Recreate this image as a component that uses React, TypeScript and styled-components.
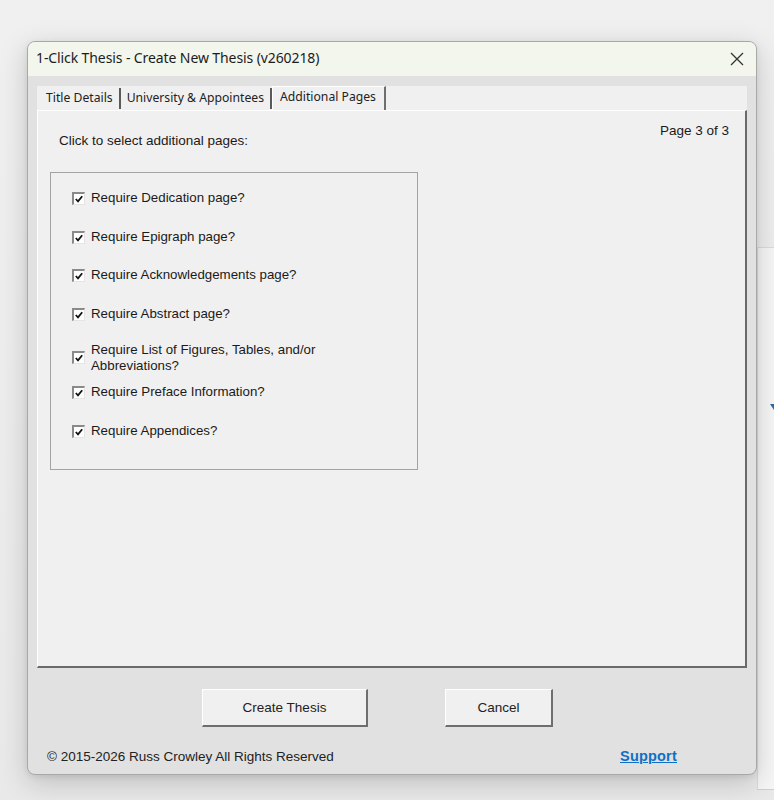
import React from "react";
import styled, { createGlobalStyle } from "styled-components";

const Global = createGlobalStyle`
  html, body { margin: 0; padding: 0; }
  body {
    background: #ececec;
    width: 774px;
    height: 800px;
    overflow: hidden;
    font-family: "Liberation Sans", Arial, sans-serif;
  }
`;

const Desktop = styled.div`
  position: relative;
  width: 774px;
  height: 800px;
  background: linear-gradient(#f0f0f0, #e9e9e9);
`;

const BackWindow = styled.div`
  position: absolute;
  left: 757px;
  top: 247px;
  width: 40px;
  height: 541px;
  background: #f6f6f6;
  border-top: 1px solid #dcdcdc;
  border-left: 1px solid #dcdcdc;
  border-bottom: 1px solid #d0d0d0;
`;

const BlueMark = styled.div`
  position: absolute;
  left: 770px;
  top: 404px;
  width: 4px;
  height: 6px;
  background: #2b6ca8;
  clip-path: polygon(0 0, 100% 0, 100% 100%);
`;

const Dialog = styled.div`
  position: absolute;
  left: 27px;
  top: 41px;
  width: 730px;
  height: 734px;
  box-sizing: border-box;
  border: 1px solid #a8a8a8;
  border-radius: 8px;
  overflow: hidden;
  background: #e1e1e1;
  box-shadow: 0 8px 28px rgba(0, 0, 0, 0.18), 0 2px 6px rgba(0, 0, 0, 0.08);
  display: flex;
  flex-direction: column;
`;

const TitleBar = styled.div`
  height: 34px;
  flex: none;
  box-sizing: border-box;
  background: #f3f6ec;
  display: flex;
  align-items: center;
  justify-content: space-between;
  padding: 0 12px 3px 8px;
`;

const Title = styled.span`
  font-family: "Noto Sans", "Open Sans", sans-serif;
  font-size: 14px;
  color: #1c1c1c;
  letter-spacing: -0.1px;
`;

const CloseIcon = styled.svg`
  width: 14px;
  height: 14px;
  margin-top: 3px;
`;

const Body = styled.div`
  flex: 1;
  display: flex;
  flex-direction: column;
  padding: 10px 9px 0 9px;
`;

const TabStrip = styled.div`
  height: 24px;
  background: #f0f0f0;
  display: flex;
  align-items: flex-end;
  padding-left: 3px;
`;

const Tab = styled.div<{ $active?: boolean }>`
  font-family: "Noto Sans", "Open Sans", sans-serif;
  font-size: 12.2px;
  color: #222;
  box-sizing: border-box;
  height: ${(p) => (p.$active ? "24px" : "21px")};
  padding: ${(p) => (p.$active ? "0 8px 4px 7px" : "0 6px 2px 6px")};
  display: flex;
  align-items: center;
  background: #f0f0f0;
  border-right: 2px solid ${(p) => (p.$active ? "#6e6e6e" : "#5a5a5a")};
  border-left: ${(p) => (p.$active ? "1px solid #ffffff" : "none")};
  border-top: ${(p) => (p.$active ? "1px solid #ffffff" : "none")};
  margin-bottom: ${(p) => (p.$active ? "0" : "1px")};
  white-space: nowrap;
`;

const Panel = styled.div`
  height: 558px;
  box-sizing: border-box;
  background: #f0f0f0;
  border-top: 1px solid #ffffff;
  border-left: 1px solid #ffffff;
  border-right: 2px solid #6a6a6a;
  border-bottom: 2px solid #6a6a6a;
  padding: 12px 16px 0 21px;
  display: flex;
  flex-direction: column;
`;

const TopRow = styled.div`
  display: flex;
  justify-content: space-between;
  align-items: flex-start;
  color: #1a1a1a;
`;

const Prompt = styled.span`
  font-family: "Liberation Sans", Arial, sans-serif;
  font-size: 13.5px;
  margin-top: 10px;
`;

const PageNo = styled.span`
  font-family: "Liberation Sans", Arial, sans-serif;
  font-size: 13.5px;
`;

const Frame = styled.div`
  margin-top: 24px;
  margin-left: -9px;
  width: 368px;
  height: 298px;
  box-sizing: border-box;
  border: 1px solid #a3a3a3;
  padding: 17px 0 0 21px;
  display: flex;
  flex-direction: column;
`;

const Row = styled.label<{ $h: number }>`
  height: ${(p) => p.$h}px;
  display: flex;
  align-items: flex-start;
  gap: 6px;
  font-family: "Liberation Sans", Arial, sans-serif;
  font-size: 13.3px;
  color: #1a1a1a;
  line-height: 16px;
`;

const Box = styled.span<{ $offset: number }>`
  flex: none;
  width: 13px;
  height: 13px;
  box-sizing: border-box;
  margin-top: ${(p) => p.$offset}px;
  background: #ffffff;
  border-top: 2px solid #8a8a8a;
  border-left: 2px solid #8a8a8a;
  border-right: 1px solid #e4e4e4;
  border-bottom: 1px solid #e4e4e4;
  display: flex;
  align-items: center;
  justify-content: center;
`;

const Check = styled.svg`
  width: 8px;
  height: 8px;
`;

const ButtonRow = styled.div`
  display: flex;
  justify-content: flex-start;
  padding: 21px 0 0 165px;
  gap: 77px;
`;

const Button = styled.button<{ $w: number }>`
  width: ${(p) => p.$w}px;
  height: 38px;
  box-sizing: border-box;
  background: #f0f0f0;
  border-top: 1px solid #ffffff;
  border-left: 1px solid #ffffff;
  border-right: 2px solid #6e6e6e;
  border-bottom: 2px solid #6e6e6e;
  font-family: "Liberation Sans", Arial, sans-serif;
  font-size: 13.5px;
  color: #222;
  padding: 0;
`;

const Footer = styled.div`
  display: flex;
  justify-content: space-between;
  align-items: center;
  padding: 21px 70px 0 10px;
  font-family: "Liberation Sans", Arial, sans-serif;
  font-size: 13.5px;
  color: #222;
`;

const SupportLink = styled.a`
  font-weight: bold;
  color: #0f6fc6;
  text-decoration: underline;
  font-size: 14.5px;
  letter-spacing: 0.2px;
`;

const items: { label: React.ReactNode; h: number; offset: number }[] = [
  { label: "Require Dedication page?", h: 39, offset: 2 },
  { label: "Require Epigraph page?", h: 38, offset: 2 },
  { label: "Require Acknowledgements page?", h: 39, offset: 2 },
  { label: "Require Abstract page?", h: 36, offset: 2 },
  {
    label: (
      <span>
        Require List of Figures, Tables, and/or
        <br />
        Abbreviations?
      </span>
    ),
    h: 42,
    offset: 9,
  },
  { label: "Require Preface Information?", h: 39, offset: 2 },
  { label: "Require Appendices?", h: 30, offset: 2 },
];

export default function App() {
  return (
    <>
      <Global />
      <Desktop>
        <BackWindow />
        <BlueMark />
        <Dialog>
          <TitleBar>
            <Title>1-Click Thesis - Create New Thesis (v260218)</Title>
            <CloseIcon viewBox="0 0 14 14">
              <path d="M1 1 L13 13 M13 1 L1 13" stroke="#333" strokeWidth="1.3" fill="none" />
            </CloseIcon>
          </TitleBar>
          <Body>
            <TabStrip>
              <Tab>Title Details</Tab>
              <Tab>University &amp; Appointees</Tab>
              <Tab $active>Additional Pages</Tab>
            </TabStrip>
            <Panel>
              <TopRow>
                <Prompt>Click to select additional pages:</Prompt>
                <PageNo>Page 3 of 3</PageNo>
              </TopRow>
              <Frame>
                {items.map((it, i) => (
                  <Row key={i} $h={it.h}>
                    <Box $offset={it.offset}>
                      <Check viewBox="0 0 8 8">
                        <path d="M0.8 4 L3 6.3 L7.2 1.2" stroke="#111" strokeWidth="1.8" fill="none" />
                      </Check>
                    </Box>
                    {it.label}
                  </Row>
                ))}
              </Frame>
            </Panel>
            <ButtonRow>
              <Button $w={166}>Create Thesis</Button>
              <Button $w={108}>Cancel</Button>
            </ButtonRow>
            <Footer>
              <span>© 2015-2026 Russ Crowley All Rights Reserved</span>
              <SupportLink href="#">Support</SupportLink>
            </Footer>
          </Body>
        </Dialog>
      </Desktop>
    </>
  );
}
